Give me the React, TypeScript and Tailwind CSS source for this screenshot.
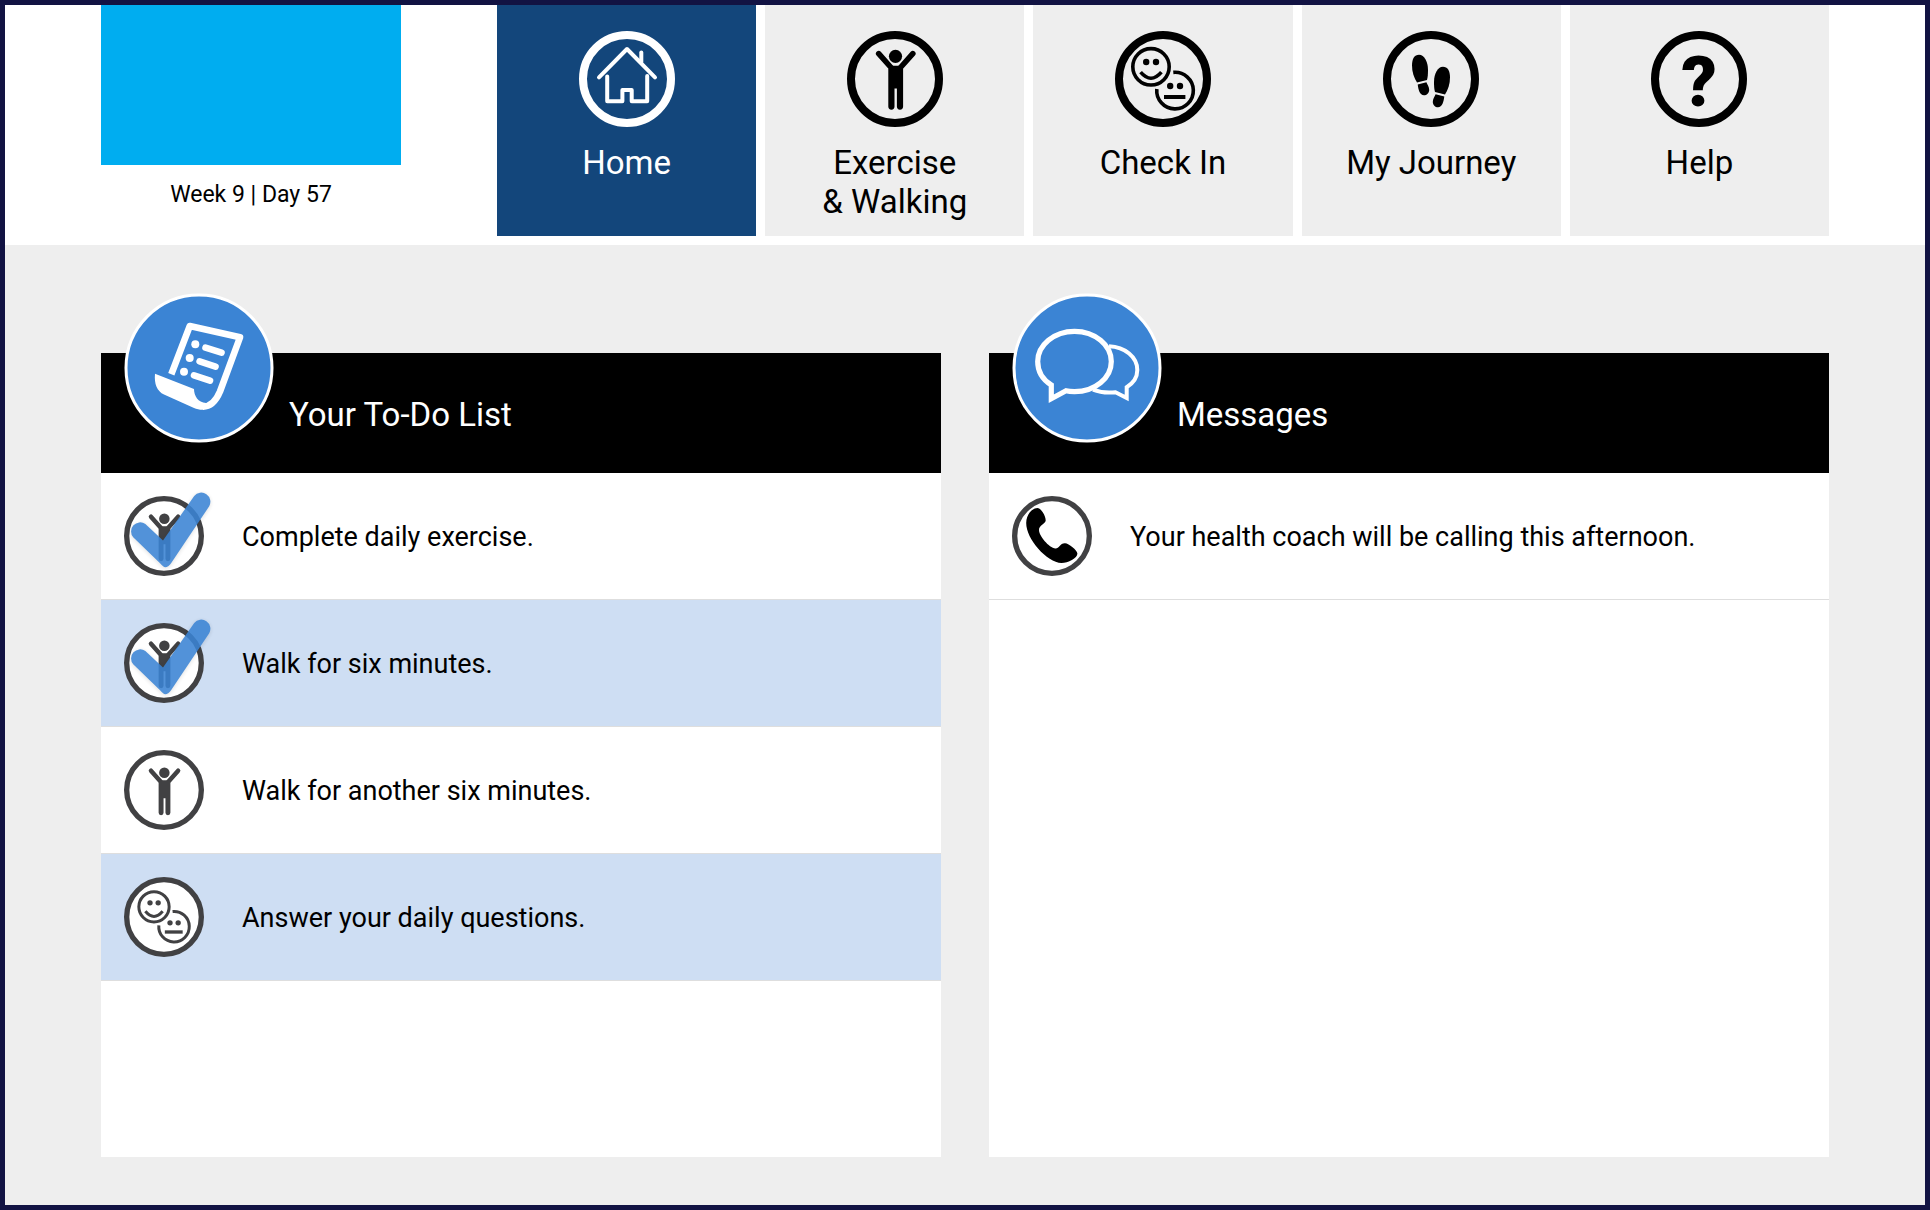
import type { ReactNode } from "react";

const HOUSE = (
  <g fill="none" stroke="currentColor" strokeWidth="4" strokeLinecap="round" strokeLinejoin="round">
    <path d="M20 46.3 48 18 76 46.3" />
    <path d="M62.3 21.5V31" />
    <path d="M28.2 45.5V70.3H43.4V59H52.7V70.3H68.2V45" />
  </g>
);

const PERSON = (
  <g fill="currentColor">
    <circle cx="48.5" cy="25.3" r="6.6" />
    <path
      d="M31.7 22.6 44 36.5M65.8 22.6 53.5 36.5"
      stroke="currentColor"
      strokeWidth="5.6"
      strokeLinecap="round"
    />
    <path d="M44.6 34.8H53L56.1 38V75.6a3 3 0 0 1-6.2 0V57.4H47.5V75.6a3 3 0 0 1-6.2 0V38Z" />
  </g>
);

const FACES = (
  <g fill="none" stroke="currentColor" strokeWidth="3.6">
    <circle cx="36" cy="35.8" r="18.2" />
    <path d="M25.6 41.2Q36 53.4 46.4 41.2" />
    <path d="M58.3 41.4A18.3 18.3 0 1 1 41.8 58" />
    <path d="M49 66H70.4" strokeWidth="4" />
    <g fill="currentColor" stroke="none">
      <circle cx="31.2" cy="31" r="3.2" />
      <circle cx="41" cy="31" r="3.2" />
      <circle cx="55.2" cy="55" r="3.2" />
      <circle cx="65" cy="55" r="3.2" />
    </g>
  </g>
);

const FOOT = (
  <>
    <path d="M34 51.4C31 47 29 41 29 34.5 29 27.5 31.5 23.7 36 23.7 41.5 23.7 45 31 45 39 45 43 44.8 46 44 49Z" />
    <path d="M34.7 53.6 43.4 51.3C44.3 53.5 46.2 56 46.2 59 46.2 62 43.7 64.3 41 64.3 36.8 64.3 35.4 59 34.7 53.6Z" />
  </>
);

const STEPS = (
  <g fill="currentColor">
    {FOOT}
    <g transform="matrix(-1 0 0 1 96 12)">{FOOT}</g>
  </g>
);

const QUESTION = (
  <text x="48" y="74.5" textAnchor="middle" fontSize="70" fontWeight="900" fill="currentColor">
    ?
  </text>
);

const SMALL_PERSON = <g transform="matrix(.955 0 0 .955 2.1 3.2)">{PERSON}</g>;

const PHONE = (
  <path
    transform="scale(1.2)"
    fill="#000"
    d="M25.5 12C28.8 12 34 20 33.7 24.5 33.3 28 27 29 27 34 27 40 37 51.8 43.5 52.5 47 52.7 48 47 53 47.2 57 47.4 65 54 65.4 57.5 65.5 62 56 67 49.5 67 35 66.5 14 43 14.2 27 14.4 18 20 12.3 25.5 12Z"
  />
);

const SCROLL = (
  <g fill="none" stroke="#fff" strokeLinejoin="round" transform="translate(0 1)">
    <path d="M47.3 80.2 65.8 32 116 43.3 96 97.5C92 107 86 112.6 79 112.6" strokeWidth="6.6" />
    <path
      fill="#fff"
      stroke="none"
      d="M31 79.7 70 95C70 102 74 108.5 82 109L80 115.8C76 116 73 115.3 70 114L40 100.6C33 97 30 90 31 79.7Z"
    />
    <path
      d="M81.5 53.7 97.5 58.7M75.6 67.4 91.5 72.6M70 81.4 86 86.7"
      strokeWidth="6.6"
      strokeLinecap="round"
    />
    <g fill="#fff" stroke="none">
      <circle cx="71.3" cy="50.3" r="4" />
      <circle cx="65.7" cy="63.9" r="4" />
      <circle cx="60" cy="77.8" r="4" />
    </g>
  </g>
);

const BUBBLES = (
  <g fill="none" stroke="#fff" transform="translate(0 1)">
    <path
      strokeWidth="5.2"
      d="M39.3 91C30.5 85.5 25.7 77 25.7 67.5 25.7 51 42 37.3 62.5 37.3S99.3 51 99.3 67.5 83 97.7 62.5 97.7C59.5 97.7 56.5 97.5 54 96.8L39.3 104.7Z"
    />
    <path
      strokeWidth="4"
      d="M97 52.3C113 53 125.3 63 125.3 76 125.3 83 121.5 89 114.7 93.2V104L103.5 98.2C96 99 88 98.5 81 95.6"
    />
  </g>
);

function NavIcon({ children }: { children: ReactNode }) {
  return (
    <svg viewBox="0 0 96 96" className="size-24" aria-hidden="true">
      <circle cx="48" cy="48" r="44" fill="none" stroke="currentColor" strokeWidth="8" />
      {children}
    </svg>
  );
}

function RowIcon({ children, done }: { children: ReactNode; done?: boolean }) {
  return (
    <svg viewBox="0 0 96 96" className="size-20 shrink-0 overflow-visible text-[#414143]" aria-hidden="true">
      <circle cx="48" cy="48" r="44.8" fill="#fff" stroke="currentColor" strokeWidth="6.4" />
      {children}
      {done && (
        <path
          className="drop-shadow-sm"
          transform="scale(1.2)"
          fill="#3b84d4"
          opacity=".88"
          d="M9.2 41.3 35.8 67C38.8 70 39.8 71.2 41.3 71.2S45.6 69.7 47.4 66.7L85.2 10.2A9.1 9.1 0 0 0 70.2 0L39 44.6 21.4 28A9.1 9.1 0 0 0 9.2 41.3Z"
        />
      )}
    </svg>
  );
}

const NAV: { label: ReactNode; key: string; icon: ReactNode; active?: boolean }[] = [
  { key: "home", label: "Home", icon: HOUSE, active: true },
  {
    key: "exercise",
    label: (
      <>
        Exercise
        <br />
        &amp; Walking
      </>
    ),
    icon: PERSON,
  },
  { key: "checkin", label: "Check In", icon: FACES },
  { key: "journey", label: "My Journey", icon: STEPS },
  { key: "help", label: "Help", icon: QUESTION },
];

type Item = { text: string; icon: ReactNode; done?: boolean };

const TODOS: Item[] = [
  { text: "Complete daily exercise.", icon: SMALL_PERSON, done: true },
  { text: "Walk for six minutes.", icon: SMALL_PERSON, done: true },
  { text: "Walk for another six minutes.", icon: SMALL_PERSON },
  { text: "Answer your daily questions.", icon: FACES },
];

const MESSAGES: Item[] = [{ text: "Your health coach will be calling this afternoon.", icon: PHONE }];

function Panel({ title, badge, items }: { title: string; badge: ReactNode; items: Item[] }) {
  return (
    <section className="flex flex-1 flex-col bg-white">
      <header className="relative flex h-[120px] items-center bg-black pt-1 pl-[188px] text-white">
        <svg viewBox="0 0 150 150" className="absolute -top-[60px] left-[23px] size-[150px]" aria-hidden="true">
          <circle cx="75" cy="75" r="73" fill="#3b84d4" stroke="#fff" strokeWidth="3" />
          {badge}
        </svg>
        <h2 className="text-[33px] leading-10">{title}</h2>
      </header>
      <ul>
        {items.map((item) => (
          <li key={item.text} className="border-b border-[#dedede] even:bg-[#cedef3]">
            <a href="#" className="flex items-center gap-[38px] p-[23px]">
              <RowIcon done={item.done}>{item.icon}</RowIcon>
              <span className="pt-0.5 text-[27px] leading-8">{item.text}</span>
            </a>
          </li>
        ))}
      </ul>
    </section>
  );
}

export default function App() {
  return (
    <div className="flex min-h-screen flex-col border-5 border-[#121343] bg-[#eeeeee] font-[Roboto,sans-serif] text-black">
      <header className="flex gap-24 bg-white px-[5%] pb-[9px]">
        <div className="w-[300px] shrink-0">
          <div className="h-40 bg-[#00adf0]" />
          <p className="mt-4 text-center text-[23px] leading-7">Week 9 | Day 57</p>
        </div>
        <nav className="grid min-h-[231px] flex-1 grid-cols-5 gap-[9px]">
          {NAV.map((item) => (
            <a
              key={item.key}
              href="#"
              aria-current={item.active ? "page" : undefined}
              className={`flex flex-col items-center gap-4 pt-[26px] text-center text-[33px] leading-[39px] ${
                item.active ? "bg-[#13467b] text-white" : "bg-[#eeeeee]"
              }`}
            >
              <NavIcon>{item.icon}</NavIcon>
              <span>{item.label}</span>
            </a>
          ))}
        </nav>
      </header>
      <main className="flex flex-1 gap-12 px-[5%] pt-[108px] pb-12">
        <Panel title="Your To-Do List" badge={SCROLL} items={TODOS} />
        <Panel title="Messages" badge={BUBBLES} items={MESSAGES} />
      </main>
    </div>
  );
}
